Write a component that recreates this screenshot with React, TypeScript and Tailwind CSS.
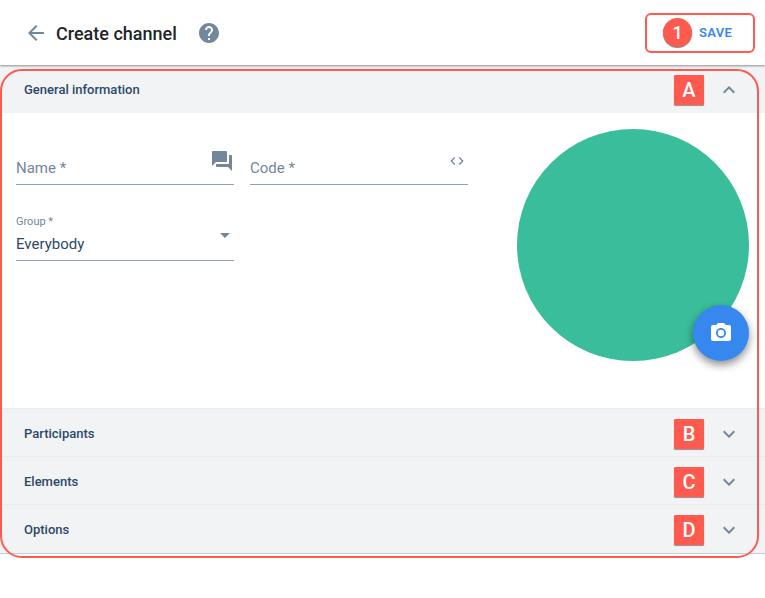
import React from "react";

function Chevron({ up = false }: { up?: boolean }) {
  return (
    <svg width="24" height="24" viewBox="0 0 24 24" fill="#73879c">
      <path d={up ? "M12 8l-6 6 1.41 1.41L12 10.83l4.59 4.58L18 14z" : "M16.59 8.59L12 13.17 7.41 8.59 6 10l6 6 6-6z"} />
    </svg>
  );
}

function Row({ title, badge, up = false, extra = "h-[47px]" }: { title: string; badge: string; up?: boolean; extra?: string }) {
  return (
    <div className={`flex items-center bg-[#f1f3f5] pl-6 pr-6 ${extra}`}>
      <span className="flex-1 text-[13px] font-medium text-[#2c4a68]">{title}</span>
      <span className="mr-[13px] flex h-[30px] w-[30px] items-center justify-center rounded-[1px] bg-[#ff5a4f] text-[20px] font-medium text-white shadow-[0_1px_1px_rgba(0,0,0,0.4)]">
        {badge}
      </span>
      <Chevron up={up} />
    </div>
  );
}

export default function App() {
  return (
    <div className="relative h-[598px] w-[765px] overflow-hidden bg-white font-['Roboto',sans-serif]">
      <header className="relative z-10 flex h-[65px] items-center bg-white pl-6 pr-[10px] shadow-[0_1px_2px_rgba(0,0,0,0.45)]">
        <svg width="24" height="24" viewBox="0 0 24 24" fill="#73879c">
          <path d="M20 11H7.83l5.59-5.59L12 4l-8 8 8 8 1.41-1.41L7.83 13H20v-2z" />
        </svg>
        <h1 className="ml-[8px] pt-px text-[18px] font-medium text-[#212529]">Create channel</h1>
        <svg className="ml-[20px]" width="24" height="24" viewBox="0 0 24 24" fill="#73879c">
          <path d="M12 2C6.48 2 2 6.48 2 12s4.48 10 10 10 10-4.48 10-10S17.52 2 12 2zm1 17h-2v-2h2v2zm2.07-7.75l-.9.92C13.45 12.9 13 13.5 13 15h-2v-.5c0-1.1.45-2.1 1.17-2.83l1.24-1.26c.37-.36.59-.86.59-1.41 0-1.1-.9-2-2-2s-2 .9-2 2H8c0-2.21 1.79-4 4-4s4 1.79 4 4c0 .88-.36 1.68-.93 2.25z" />
        </svg>
        <div className="flex-1" />
        <div className="flex h-[40px] w-[110px] items-center rounded-[6px] border-2 border-[#ff5a4f] pl-[16px]">
          <span className="flex h-[29px] w-[29px] items-center justify-center rounded-full bg-[#ff5a4f] text-[18px] font-medium text-white shadow-[0_1px_1px_rgba(0,0,0,0.5)]">1</span>
          <span className="ml-[7px] text-[13px] font-semibold tracking-[0.3px] text-[#3688ee]">SAVE</span>
        </div>
      </header>

      <main className="mt-px">
        <Row title="General information" badge="A" up />
        <section className="flex h-[295px] items-start bg-white pl-4 pr-4">
          <div className="w-[452px] pt-[27px]">
            <div className="flex gap-4">
              <div className="relative flex h-[45px] w-[218px] items-end border-b border-[#8fa3b5] pb-[5px] text-[15px] text-[#73879c]">
                Name *
                <svg className="absolute right-0 top-[9px]" width="24" height="24" viewBox="0 0 24 24" fill="#73879c">
                  <path d="M21 6h-2v9H6v2c0 .55.45 1 1 1h11l4 4V7c0-.55-.45-1-1-1zm-4 6V3c0-.55-.45-1-1-1H3c-.55 0-1 .45-1 1v14l4-4h10c.55 0 1-.45 1-1z" />
                </svg>
              </div>
              <div className="relative flex h-[45px] w-[218px] items-end border-b border-[#8fa3b5] pb-[5px] text-[15px] text-[#73879c]">
                Code *
                <svg className="absolute right-[3px] top-[13px]" width="16" height="16" viewBox="0 0 24 24" fill="#73879c">
                  <path d="M9.4 16.6L4.8 12l4.6-4.6L8 6l-6 6 6 6 1.4-1.4zm5.2 0l4.6-4.6-4.6-4.6L16 6l6 6-6 6-1.4-1.4z" />
                </svg>
              </div>
            </div>
            <div className="relative mt-[31px] w-[218px] border-b border-[#8fa3b5] pb-[6px]">
              <div className="text-[11px] leading-[12px] text-[#73879c]">Group *</div>
              <div className="mt-[6px] text-[15px] leading-[20px] text-[#2c4a68]">Everybody</div>
              <span className="absolute right-[4px] top-[17px] h-0 w-0 border-x-[5px] border-t-[5px] border-x-transparent border-t-[#73879c]" />
            </div>
          </div>
          <div className="relative mt-[16px] ml-[49px] h-[232px] w-[232px] rounded-full bg-[#3abd9a]">
            <button className="absolute bottom-0 right-0 flex h-[56px] w-[56px] items-center justify-center rounded-full bg-[#3688ee] shadow-[0_4px_8px_rgba(0,0,0,0.45)]">
              <svg width="24" height="24" viewBox="0 0 24 24" fill="#fff">
                <circle cx="12" cy="12" r="3.2" />
                <path d="M9 2L7.17 4H4c-1.1 0-2 .9-2 2v12c0 1.1.9 2 2 2h16c1.1 0 2-.9 2-2V6c0-1.1-.9-2-2-2h-3.17L15 2H9zm3 15c-2.76 0-5-2.24-5-5s2.24-5 5-5 5 2.24 5 5-2.24 5-5 5z" />
              </svg>
            </button>
          </div>
        </section>
        <div className="flex flex-col gap-px bg-[#e9ecef] pt-px">
          <Row title="Participants" badge="B" extra="h-[47px] pt-[2px]" />
          <Row title="Elements" badge="C" extra="h-[47px] pt-[2px]" />
          <Row title="Options" badge="D" extra="h-[48px] pt-[2px]" />
        </div>
        <div className="h-px bg-[#c3ccd4]" />
      </main>

      <div className="pointer-events-none absolute left-0 top-[69px] z-20 h-[489px] w-[759px] rounded-[22px] border-2 border-[#ff5a4f]" />
    </div>
  );
}
